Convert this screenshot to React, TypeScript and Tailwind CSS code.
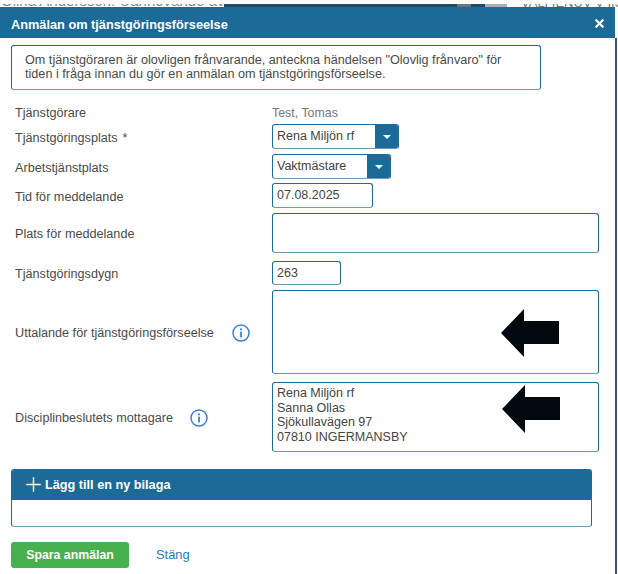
import { Plus, X } from 'lucide-react';
import type { ReactNode } from 'react';

const fieldBorder = 'border border-[#1f6a96] border-b-[#6d9cb6] rounded-[3px] bg-white';

function Row({ label, mt, children }: { label: ReactNode; mt: string; children: ReactNode }) {
  return (
    <div className={`flex items-center ${mt}`}>
      <div className="w-[257px] shrink-0 flex items-center pt-[2px] text-[12.65px] leading-[18px] text-[#4a4a4a]">{label}</div>
      {children}
    </div>
  );
}

function SelectBox({ value, width, textWidth }: { value: string; width: string; textWidth: string }) {
  return (
    <div className={`${width} h-[25px] flex ${fieldBorder} overflow-hidden`}>
      <div className={`${textWidth} px-[4px] leading-[23px] text-[#444]`}>{value}</div>
      <div className="flex-1 bg-[#1b6a98] flex items-center justify-center">
        <div className="w-0 h-0 border-x-[4px] border-x-transparent border-t-[4px] border-t-white" />
      </div>
    </div>
  );
}

function InfoIcon({ className }: { className: string }) {
  return (
    <svg width="18" height="18" viewBox="0 0 18 18" fill="none" className={className}>
      <circle cx="9" cy="9" r="8" stroke="#3f7fd9" strokeWidth="1.5" />
      <circle cx="9" cy="5.3" r="1.1" fill="#3f7fd9" />
      <rect x="8.1" y="7.6" width="1.8" height="5.8" fill="#3f7fd9" />
    </svg>
  );
}

function BlackArrow({ className }: { className: string }) {
  return (
    <svg width="59" height="48" viewBox="0 0 59 48" className={className}>
      <path d="M0 24 L23 0 V12 H58 V35 H23 V48 Z" fill="#020a10" />
    </svg>
  );
}

// page behind the dialog, only a sliver of it shows above the header
function TopStrip() {
  return (
    <div className="mt-[4px] h-[3px] w-[618px] flex overflow-hidden">
      <div className="w-[224px] overflow-hidden">
        <div className="mt-[-12px] pl-[1px] text-[15px] leading-[17px] text-[#8a8a8a] whitespace-nowrap">
          Olina Andersson: Uanhövande av tjänst
        </div>
      </div>
      <div className="w-[233px] bg-[#1d4a66]" />
      <div className="w-[14px] bg-[#6b7478]" />
      <div className="w-[14px] bg-[#1d4a66]" />
      <div className="w-[22px] bg-[#a9b0b4]" />
      <div className="flex-1 overflow-hidden">
        <div className="mt-[-9px] pl-[14px] text-[13px] leading-[15px] text-[#777] whitespace-nowrap">VALI IENUV V IIS</div>
      </div>
    </div>
  );
}

export default function App() {
  return (
    <div className="w-[618px] h-[574px] overflow-hidden bg-white text-[12.5px] font-['Liberation_Sans',Arial,sans-serif]">
      <TopStrip />
      <div className="h-[31px] w-[615px] bg-[#1b6a98] flex items-center justify-between pl-[11px] pr-[9px] pt-[4px] text-white">
        <span className="font-bold text-[12.75px]">Anmälan om tjänstgöringsförseelse</span>
        <X size={13} strokeWidth={4} className="mt-[-3px]" />
      </div>

      <div className="w-[617px] h-[536px] border-r-2 border-[#3a5666] px-[11px] pt-[7px]">
        <div className={`w-[530px] h-[45px] px-[13px] pt-[7px] leading-[14px] text-[12.65px] text-[#4a4a4a] ${fieldBorder}`}>
          Om tjänstgöraren är olovligen frånvarande, anteckna händelsen "Olovlig frånvaro" för
          <br />
          tiden i fråga innan du gör en anmälan om tjänstgöringsförseelse.
        </div>

        <div className="pl-[4px]">
          <Row label="Tjänstgörare" mt="mt-[12px]">
            <span className="text-[#777] text-[12.4px] leading-[18px] pt-[2px]">Test, Tomas</span>
          </Row>
          <Row
            label={
              <>
                Tjänstgöringsplats
                <span className="ml-[5px]">*</span>
              </>
            }
            mt="mt-[2px]"
          >
            <SelectBox value="Rena Miljön rf" width="w-[127px]" textWidth="w-[102px]" />
          </Row>
          <Row label="Arbetstjänstplats" mt="mt-[5px]">
            <SelectBox value="Vaktmästare" width="w-[119px]" textWidth="w-[94px]" />
          </Row>
          <Row label="Tid för meddelande" mt="mt-[4px]">
            <div className={`w-[101px] h-[25px] px-[4px] leading-[23px] text-[#444] ${fieldBorder}`}>07.08.2025</div>
          </Row>
          <Row label="Plats för meddelande" mt="mt-[5px]">
            <div className={`w-[327px] h-[40px] ${fieldBorder}`} />
          </Row>
          <Row label="Tjänstgöringsdygn" mt="mt-[8px]">
            <div className={`w-[69px] h-[24px] px-[4px] leading-[22px] text-[#444] ${fieldBorder}`}>263</div>
          </Row>
          <Row
            label={
              <>
                <span>Uttalande för tjänstgöringsförseelse</span>
                <InfoIcon className="ml-[18px]" />
              </>
            }
            mt="mt-[5px]"
          >
            <div className={`relative w-[327px] h-[84px] ${fieldBorder}`}>
              <BlackArrow className="absolute left-[228px] top-[18px]" />
            </div>
          </Row>
          <Row
            label={
              <>
                <span>Disciplinbeslutets mottagare</span>
                <InfoIcon className="ml-[17px]" />
              </>
            }
            mt="mt-[8px]"
          >
            <div className={`relative w-[327px] h-[70px] px-[4px] pt-[3px] leading-[14.7px] text-[#444] ${fieldBorder}`}>
              Rena Miljön rf
              <br />
              Sanna Ollas
              <br />
              Sjökullavägen 97
              <br />
              07810 INGERMANSBY
              <BlackArrow className="absolute left-[229px] top-[2px]" />
            </div>
          </Row>
        </div>

        <div className={`w-[581px] h-[58px] mt-[17px] overflow-hidden ${fieldBorder}`}>
          <div className="h-[30px] bg-[#1b6a98] flex items-center pl-[10px] text-white font-bold text-[12.7px] leading-[18px]">
            <Plus size={23} strokeWidth={1.5} className="mt-[-2px]" />
            Lägg till en ny bilaga
          </div>
        </div>

        <div className="flex items-center mt-[15px]">
          <button className="w-[118px] h-[26px] bg-[#47b04f] rounded-[3px] text-white font-bold text-[12.3px]">Spara anmälan</button>
          <span className="ml-[27px] text-[#2a7db5] text-[12.9px]">Stäng</span>
        </div>
      </div>
    </div>
  );
}
